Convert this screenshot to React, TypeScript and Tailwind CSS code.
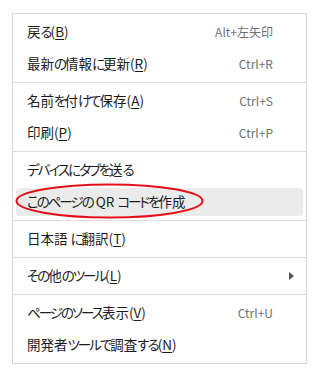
import React from "react";

type Item = {
  label: string;
  key?: string;
  shortcut?: string;
  submenu?: boolean;
  highlight?: boolean;
};

const groups: Item[][] = [
  [
    { label: "戻る", key: "B", shortcut: "Alt+左矢印" },
    { label: "最新の情報に更新", key: "R", shortcut: "Ctrl+R" },
  ],
  [
    { label: "名前を付けて保存", key: "A", shortcut: "Ctrl+S" },
    { label: "印刷", key: "P", shortcut: "Ctrl+P" },
  ],
  [
    { label: "デバイスにタブを送る" },
    { label: "このページの QR コードを作成", highlight: true },
  ],
  [{ label: "日本語 に翻訳", key: "T" }],
  [{ label: "その他のツール", key: "L", submenu: true }],
  [
    { label: "ページのソース表示", key: "V", shortcut: "Ctrl+U" },
    { label: "開発者ツールで調査する", key: "N" },
  ],
];

function Label({ text }: { text: string }) {
  const parts = text.match(/[\u3040-\u30ff]+|[^\u3040-\u30ff]+/g) || [];
  return (
    <>
      {parts.map((p, i) =>
        /[\u3040-\u30ff]/.test(p) ? (
          <span key={i} className="tracking-[-2px]">
            {p}
          </span>
        ) : (
          <span key={i}>{p}</span>
        )
      )}
    </>
  );
}

function Row({ item }: { item: Item }) {
  return (
    <div className="h-[32px] py-[2px] px-[3px]">
      <div
        className={
          "h-[28px] flex items-center pl-[11px] pr-[9px] rounded-[4px] " +
          (item.highlight ? "bg-[#ebebeb]" : "")
        }
      >
        <span className="flex-1 text-[13.5px] text-[#1b1b1b] whitespace-pre leading-none [font-feature-settings:'palt']">
          <Label text={item.label} />
          {item.key && (
            <>
              (<span className="underline underline-offset-[2px] decoration-1">{item.key}</span>)
            </>
          )}
        </span>
        {item.shortcut && (
          <span className="text-[12px] text-[#717171] leading-none">{item.shortcut}</span>
        )}
        <span className="w-[21px] flex justify-end items-center">
          {item.submenu && (
            <svg width="5" height="8" viewBox="0 0 5 8">
              <path d="M0 0 L5 4 L0 8 Z" fill="#555" />
            </svg>
          )}
        </span>
      </div>
    </div>
  );
}

export default function App() {
  return (
    <div
      className="relative w-[323px] h-[383px] bg-white pt-[13px] pl-[12px]"
      style={{ fontFamily: '"Noto Sans CJK JP", "Noto Sans", sans-serif' }}
    >
      <div className="w-[295px] border border-[#d6d6d6] bg-white">
        {groups.map((g, gi) => (
          <div
            key={gi}
            className={"py-[2px] " + (gi > 0 ? "border-t border-[#dcdcdc]" : "")}
          >
            {g.map((it, ii) => (
              <Row key={ii} item={it} />
            ))}
          </div>
        ))}
      </div>
      <svg
        className="absolute left-0 top-0 pointer-events-none"
        width="323"
        height="383"
        viewBox="0 0 323 383"
      >
        <ellipse
          cx="109.5"
          cy="201"
          rx="93"
          ry="16.5"
          fill="none"
          stroke="#e3101a"
          strokeWidth="2"
        />
      </svg>
    </div>
  );
}
